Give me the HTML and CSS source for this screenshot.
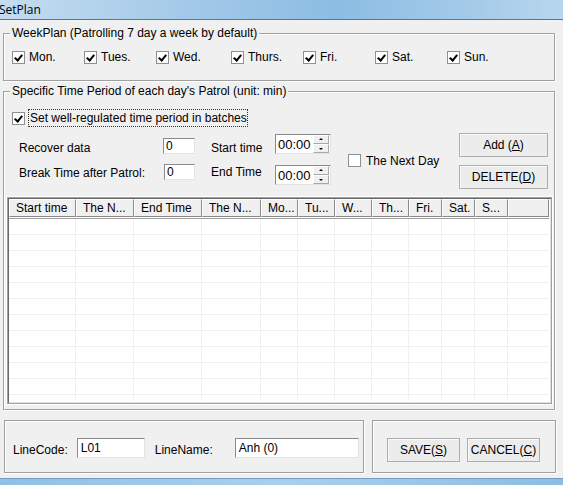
FILE: index.html
```html
<!DOCTYPE html>
<html>
<head>
<meta charset="utf-8">
<link rel="stylesheet" href="styles.css">
</head>
<body>
<div class="window">
  <div class="titlebar"><span class="title">SetPlan</span></div>

  <div class="group week">
    <span class="legend">WeekPlan (Patrolling 7 day a week by default)</span>
    <div class="days">
      <label class="day"><span class="cb checked"></span>Mon.</label>
      <label class="day"><span class="cb checked"></span>Tues.</label>
      <label class="day wide"><span class="cb checked"></span>Wed.</label>
      <label class="day"><span class="cb checked"></span>Thurs.</label>
      <label class="day"><span class="cb checked"></span>Fri.</label>
      <label class="day"><span class="cb checked"></span>Sat.</label>
      <label class="day"><span class="cb checked"></span>Sun.</label>
    </div>
  </div>

  <div class="group period">
    <span class="legend">Specific Time Period of each day's Patrol (unit: min)</span>
    <label class="batch"><span class="cb checked"></span><span class="focus">Set well-regulated time period in batches</span></label>

    <div class="form">
      <span class="lbl r1">Recover data</span>
      <span class="field r1f">0</span>
      <span class="lbl r1">Start time</span>
      <span class="time r1t">00:00<span class="spin"><span class="up"></span><span class="down"></span></span></span>
      <label class="nextday"><span class="cb"></span>The Next Day</label>
      <span class="btn">Add (<u>A</u>)</span>

      <span class="lbl r2">Break Time after Patrol:</span>
      <span class="field r2f">0</span>
      <span class="lbl r2e">End Time</span>
      <span class="time r2t">00:00<span class="spin"><span class="up"></span><span class="down"></span></span></span>
      <span class="btn r2b">DELETE(<u>D</u>)</span>
    </div>

    <div class="grid">
      <div class="head">
        <span class="hc c1">Start time</span>
        <span class="hc c2">The N...</span>
        <span class="hc c3">End Time</span>
        <span class="hc c4">The N...</span>
        <span class="hc c5">Mo...</span>
        <span class="hc c5">Tu...</span>
        <span class="hc c5">W...</span>
        <span class="hc c5">Th...</span>
        <span class="hc c6">Fri.</span>
        <span class="hc c6">Sat.</span>
        <span class="hc c6">S...</span>
        <span class="hc rest"></span>
      </div>
      <div class="body"></div>
    </div>
  </div>

  <div class="bottom">
    <div class="group line">
      <span class="lbl">LineCode:</span>
      <span class="field code">L01</span>
      <span class="lbl name">LineName:</span>
      <span class="field namef">Anh (0)</span>
    </div>
    <div class="group actions">
      <span class="btn save">SAVE(<u>S</u>)</span>
      <span class="btn cancel">CANCEL(<u>C</u>)</span>
    </div>
  </div>

  <div class="footbar"></div>
</div>
</body>
</html>
```
FILE: styles.css
```css
html, body {
  margin: 0;
  padding: 0;
}
body {
  width: 563px;
  height: 485px;
  overflow: hidden;
  background: #f0f0f0;
  font-family: "Liberation Sans", Arial, sans-serif;
  font-size: 12px;
  color: #000;
}
.window {
  display: flex;
  flex-direction: column;
  height: 485px;
}
.titlebar {
  height: 19px;
  border-bottom: 1px solid #56789a;
  background: linear-gradient(90deg, #c4dcf0 0%, #a2c8e8 35%, #8cbde3 60%, #a6cbe9 85%, #b8d6ee 100%);
  display: flex;
  align-items: center;
  flex: none;
}
.title {
  margin-left: -1px;
  font-family: "Open Sans", "DejaVu Sans", sans-serif;
  font-size: 12px;
  color: #000;
  line-height: 16px;
}
.group {
  position: relative;
  border: 1px solid #a0a0a0;
  box-shadow: inset 1px 1px 0 #fff, 1px 1px 0 #fff;
  box-sizing: border-box;
}
.legend {
  position: absolute;
  top: -8px;
  left: 6px;
  padding: 0 2px 0 2px;
  background: #f0f0f0;
  line-height: 14px;
  white-space: nowrap;
}
.week {
  margin: 13px 0 0 3px;
  width: 552px;
  height: 48px;
  flex: none;
}
.days {
  display: flex;
  padding: 17px 0 0 8px;
}
.day {
  width: 72px;
  display: flex;
  align-items: center;
  line-height: 13px;
}
.day.wide { width: 75px; }
.cb {
  width: 11px;
  height: 11px;
  border: 1px solid #8e8f8f;
  background: #fff;
  margin-right: 4px;
  flex: none;
  position: relative;
}
.cb.checked::after {
  content: "";
  position: absolute;
  left: 2px;
  top: 1px;
  width: 3px;
  height: 6px;
  border-right: 2px solid #000;
  border-bottom: 2px solid #000;
  transform: translate(1px, 0) rotate(40deg);
}
.period {
  margin: 10px 0 0 3px;
  width: 552px;
  height: 319px;
  flex: none;
}
.batch {
  display: flex;
  align-items: center;
  margin: 18px 0 0 8px;
  width: 250px;
}
.batch .cb { margin-right: 4px; }
.focus {
  outline: 1px dotted #333;
  outline-offset: 0;
  padding: 1px 0 1px 1px;
  line-height: 14px;
}
.form {
  display: grid;
  grid-template-columns: 144px 48px 64px 73px 111px 89px;
  grid-template-rows: 24px 24px;
  row-gap: 7px;
  margin: 7px 0 0 15px;
  align-items: start;
}
.lbl {
  line-height: 14px;
  white-space: nowrap;
}
.lbl.r1 { margin-top: 8px; }
.lbl.r2 { margin-top: 2px; }
.lbl.r2e { margin-top: 1px; }
.field {
  display: block;
  box-sizing: border-box;
  height: 16px;
  background: #fff;
  border-top: 1px solid #8a8a8a;
  border-left: 1px solid #8a8a8a;
  border-right: 1px solid #e3e3e3;
  border-bottom: 1px solid #e3e3e3;
  padding-left: 2px;
  line-height: 14px;
}
.r1f { width: 32px; margin-top: 5px; }
.r2f { width: 31px; margin-top: 0; margin-left: 1px; }
.time {
  display: flex;
  align-items: center;
  box-sizing: border-box;
  width: 56px;
  height: 20px;
  background: #fff;
  border-top: 1px solid #8a8a8a;
  border-left: 1px solid #8a8a8a;
  border-right: 1px solid #e3e3e3;
  border-bottom: 1px solid #e3e3e3;
  padding-left: 2px;
  font-size: 13px;
  margin-top: 1px;
}
.spin {
  display: flex;
  flex-direction: column;
  margin-left: auto;
  margin-right: 1px;
  width: 16px;
}
.spin span {
  position: relative;
  height: 7px;
  border: 1px solid #a9a9a9;
  border-top-color: #fff;
  border-left-color: #fff;
  background: #f0f0f0;
  box-sizing: content-box;
  width: 14px;
}
.spin .up::after, .spin .down::after {
  content: "";
  position: absolute;
  left: 5px;
  width: 0;
  height: 0;
  border-left: 2px solid transparent;
  border-right: 2px solid transparent;
}
.spin .up::after { top: 2px; border-bottom: 2px solid #000; }
.spin .down::after { top: 3px; border-top: 2px solid #000; }
.nextday {
  grid-row: 1 / 3;
  grid-column: 5;
  align-self: center;
  display: flex;
  align-items: center;
  line-height: 14px;
}
.nextday .cb { margin-right: 5px; }
.btn {
  display: flex;
  align-items: center;
  justify-content: center;
  box-sizing: border-box;
  height: 24px;
  border: 1px solid #adadad;
  background: #ececec;
  box-shadow: inset 1px 1px 0 #fcfcfc;
  line-height: 14px;
  white-space: nowrap;
}
.r2b { margin-top: 1px; grid-column: 6; }
.grid {
  margin: 9px 0 0 3px;
  width: 545px;
  height: 207px;
  box-sizing: border-box;
  border: 1px solid #a0a0a0;
  outline: 1px solid #fff;
  padding: 0;
  display: flex;
  flex-direction: column;
  background: #fff;
  box-shadow: inset 1px 1px 0 #696969, inset -1px -1px 0 #e3e3e3;
}
.head {
  display: flex;
  height: 19px;
  margin: 1px 2px 0 1px;
  flex: none;
  border-bottom: 1px solid #a0a0a0;
}
.hc {
  box-sizing: border-box;
  height: 18px;
  background: #f0f0f0;
  border-left: 1px solid #fff;
  border-top: 1px solid #fff;
  border-right: 1px solid #8a8a8a;
  border-bottom: 1px solid #8a8a8a;
  padding-left: 6px;
  line-height: 16px;
  white-space: nowrap;
  overflow: hidden;
}
.c1 { width: 67px; }
.c2 { width: 58px; }
.c3 { width: 68px; }
.c4 { width: 59px; }
.c5 { width: 37px; }
.c6 { width: 33px; }
.rest { flex: 1; }
.body {
  flex: 1;
  margin: 0 2px 2px 1px;
  background:
    linear-gradient(90deg,
      transparent 66px, #f0f0f0 66px 67px,
      transparent 67px 124px, #f0f0f0 124px 125px,
      transparent 125px 192px, #f0f0f0 192px 193px,
      transparent 193px 251px, #f0f0f0 251px 252px,
      transparent 252px 288px, #f0f0f0 288px 289px,
      transparent 289px 325px, #f0f0f0 325px 326px,
      transparent 326px 362px, #f0f0f0 362px 363px,
      transparent 363px 399px, #f0f0f0 399px 400px,
      transparent 400px 432px, #f0f0f0 432px 433px,
      transparent 433px 465px, #f0f0f0 465px 466px,
      transparent 466px 498px, #f0f0f0 498px 499px,
      transparent 499px),
    repeating-linear-gradient(180deg, transparent 0 15px, #f0f0f0 15px 16px),
    #fff;
}
.bottom {
  display: flex;
  margin: 10px 0 0 4px;
  gap: 8px;
  flex: none;
}
.line {
  width: 360px;
  height: 53px;
  display: flex;
  align-items: center;
  padding: 2px 0 0 8px;
}
.line .lbl { margin-top: 4px; }
.line .field {
  height: 20px;
  line-height: 18px;
  padding-left: 3px;
  font-size: 12px;
}
.code { width: 68px; margin-left: 9px; }
.name { margin-left: 10px; }
.namef { width: 124px; margin-left: 22px; }
.actions {
  width: 184px;
  height: 53px;
  display: flex;
  align-items: center;
  padding: 6px 0 0 14px;
  gap: 7px;
}
.save { width: 73px; }
.cancel { width: 73px; }
.footbar {
  margin-top: auto;
  height: 6px;
  border-top: 1px solid #7a9cbc;
  background: linear-gradient(90deg, #8fc0e6, #a9cfee 50%, #8cbde3);
  flex: none;
}
```
